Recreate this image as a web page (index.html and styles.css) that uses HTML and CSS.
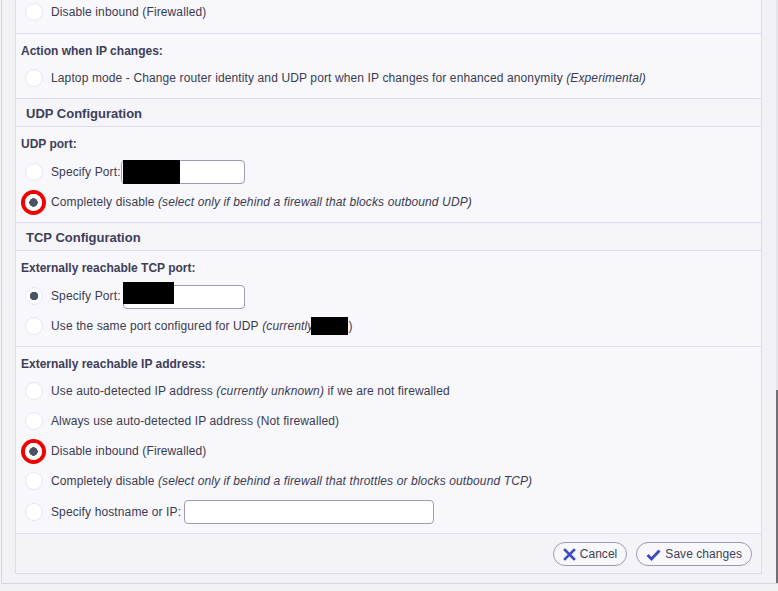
FILE: index.html
```html
<!DOCTYPE html>
<html>
<head>
    <meta charset="utf-8"/>
    <title>Network Configuration</title>
    <link rel="stylesheet" href="styles.css">
</head>
<body>
    <div class="frame">
        <form class="config-panel">

            <!-- inbound (tail of the previous block) -->
            <div class="section first">
                <label class="opt"><input type="radio" name="v4"> Disable inbound (Firewalled)</label>
            </div>

            <div class="section">
                <div class="label">Action when IP changes:</div>
                <label class="opt"><input type="radio" name="laptop"> Laptop mode - Change router identity and UDP port when IP changes for enhanced anonymity&nbsp;<i>(Experimental)</i></label>
            </div>

            <div class="sect-title">UDP Configuration</div>
            <div class="section">
                <div class="label">UDP port:</div>
                <label class="opt tall"><input type="radio" name="udp"> Specify Port:&nbsp;<span class="field"><input type="text" class="port-input"><span class="redact udp"></span></span></label>
                <label class="opt"><span class="mark"><input type="radio" name="udp" checked></span> Completely disable&nbsp;<i>(select only if behind a firewall that blocks outbound UDP)</i></label>
            </div>

            <div class="sect-title">TCP Configuration</div>
            <div class="section">
                <div class="label">Externally reachable TCP port:</div>
                <label class="opt tall"><input type="radio" name="tcpport" checked> Specify Port:&nbsp;<span class="field"><input type="text" class="port-input tcp"><span class="redact tcp"></span></span></label>
                <label class="opt"><input type="radio" name="tcpport"> Use the same port configured for UDP&nbsp;<i>(currently</i><span class="redact inline"></span>)</label>
            </div>

            <div class="section">
                <div class="label">Externally reachable IP address:</div>
                <label class="opt"><input type="radio" name="ntcp"> Use auto-detected IP address&nbsp;<i>(currently unknown)</i>&nbsp;if we are not firewalled</label>
                <label class="opt"><input type="radio" name="ntcp"> Always use auto-detected IP address (Not firewalled)</label>
                <label class="opt"><span class="mark"><input type="radio" name="ntcp" checked></span> Disable inbound (Firewalled)</label>
                <label class="opt"><input type="radio" name="ntcp"> Completely disable&nbsp;<i>(select only if behind a firewall that throttles or blocks outbound TCP)</i></label>
                <label class="opt host"><input type="radio" name="ntcp"> Specify hostname or IP:&nbsp;<input type="text" class="host-input"></label>
            </div>

            <div class="actions">
                <button type="reset" class="btn">
                    <svg width="13" height="13" viewBox="0 0 13 13"><path d="M2 2 L11 11 M11 2 L2 11" stroke="#3a4cc0" stroke-width="2.6" stroke-linecap="square"/></svg>
                    Cancel
                </button>
                <button type="submit" class="btn">
                    <svg width="15" height="13" viewBox="0 0 15 13"><path d="M1.5 7 L5.5 11 L13.5 2.5" fill="none" stroke="#3a4cc0" stroke-width="2.8"/></svg>
                    Save changes
                </button>
            </div>
        </form>
    </div>
</body>
</html>
```

FILE: styles.css
```css
body {
    margin: 0;
    font-family: "Liberation Sans", Arial, sans-serif;
    font-size: 12px;
    color: #3b3b4f;
    background-color: #f2f2f6;
}

/* outer page frame */
.frame {
    margin-left: 1px;
    border-left: 1px solid #d6d6de;
    border-bottom: 1px solid #d6d6de;
    padding: 0 16px 15px 13px;
    height: 573px;
    background: linear-gradient(to bottom, #e4e4ea 395px, #707078 395px) right top / 2px 100% no-repeat, #f2f2f6;
}

.config-panel {
    margin-top: -5px;
    border: 1px solid #dcdce6;
    border-top: none;
    background-color: #f7f7fc;
}

/* blocks */
.section {
    padding: 7px 0 5px;
    border-bottom: 1px solid #dcdcf2;
}
.section.first {
    padding: 2px 0 6px;
}
.label {
    height: 20px;
    line-height: 20px;
    padding: 0 0 2px 5px;
    font-weight: bold;
    color: #3e3e56;
}
.sect-title {
    height: 26px;
    padding: 1px 0 0 10px;
    line-height: 28px;
    font-size: 13px;
    font-weight: bold;
    color: #3e3e56;
    background-color: #f4f4f9;
    border-bottom: 1px solid #dedee8;
}

/* option rows */
.opt {
    display: flex;
    align-items: center;
    height: 30px;
    padding-left: 9px;
    white-space: nowrap;
    letter-spacing: 0.12px;
}
.opt.tall {
    height: 31px;
}
.opt.host {
    height: 32px;
}
.opt i {
    font-style: italic;
}

input[type="radio"] {
    -webkit-appearance: none;
    appearance: none;
    width: 18px;
    height: 18px;
    margin: 0 8px 0 0;
    border: 1px solid #e6e6f6;
    border-radius: 50%;
    background-color: #fff;
    flex-shrink: 0;
}
input[type="radio"]:checked {
    background: radial-gradient(circle, #4b5268 4px, #fff 4.5px);
}

/* red ring round a chosen option */
.mark {
    display: flex;
    margin: 0 5px 0 -4px;
    border: 4px solid #f00000;
    border-radius: 50%;
}
.mark input[type="radio"] {
    width: 17px;
    height: 17px;
    margin: 0;
    border: none;
}

/* text fields */
.field {
    position: relative;
    display: inline-flex;
}
.port-input,
.host-input {
    height: 24px;
    box-sizing: border-box;
    border: 1px solid #9c9cb2;
    border-radius: 4px;
    background-color: #fff;
    font-family: inherit;
    font-size: 12px;
}
.port-input {
    width: 124px;
    margin-left: -3px;
}
.port-input.tcp {
    width: 122px;
    margin-left: -1px;
    margin-top: 2px;
}
.host-input {
    width: 250px;
    margin-left: -1px;
}
.redact {
    position: absolute;
    top: 0;
    background-color: #000;
}
.redact.udp {
    left: -1px;
    width: 57px;
    height: 24px;
}
.redact.tcp {
    left: -1px;
    top: -1px;
    width: 51px;
    height: 22px;
}
.redact.inline {
    position: static;
    display: inline-block;
    width: 37px;
    height: 18px;
    margin-left: -2px;
}

/* buttons */
.actions {
    display: flex;
    justify-content: flex-end;
    gap: 9px;
    padding: 8px 9px 7px 0;
    background-color: #f4f4f8;
}
.btn {
    display: flex;
    align-items: center;
    gap: 4px;
    height: 24px;
    padding: 0 9px;
    border: 1px solid #9a9ab4;
    border-radius: 12px;
    background-color: #f8f8fc;
    color: #3f3f52;
    font-family: inherit;
    font-size: 12px;
    letter-spacing: 0.05px;
    cursor: pointer;
}
```
